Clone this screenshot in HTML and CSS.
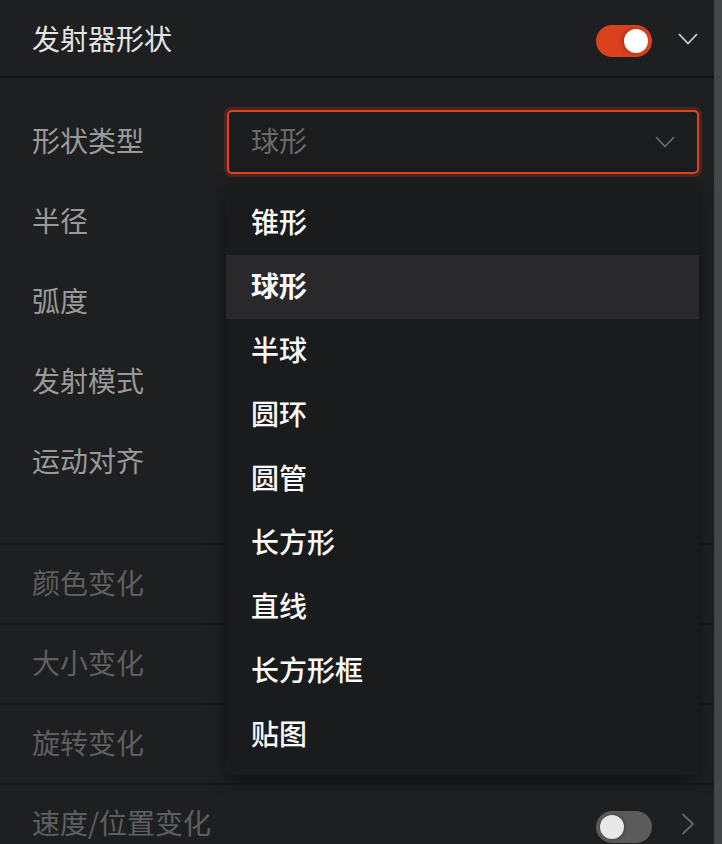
FILE: index.html
```html
<!DOCTYPE html>
<html>
  <head>
    <meta charset="utf-8">
    <title>发射器形状</title>
    <link rel="stylesheet" href="styles.css">
  </head>
  <body>
    <div class="panel">
      <div class="panel-header">
        <h1 class="title">发射器形状</h1>
        <span class="switch on"><span class="knob"></span></span>
        <svg class="chevron" width="20" height="12" viewBox="0 0 20 12">
          <polyline points="1,1 10,10.5 19,1" fill="none" stroke="#d0d0d0" stroke-width="1.8" />
        </svg>
      </div>

      <div class="form">
        <div class="field">
          <label class="field-label">形状类型</label>
          <div class="select-wrap">
            <div class="select">
              <span class="select-value">球形</span>
              <svg class="select-arrow" width="20" height="12" viewBox="0 0 20 12">
                <polyline points="1,1 10,10.5 19,1" fill="none" stroke="#6a6a6a" stroke-width="1.8" />
              </svg>
            </div>
            <ul class="menu">
              <li class="menu-item">锥形</li>
              <li class="menu-item selected">球形</li>
              <li class="menu-item">半球</li>
              <li class="menu-item">圆环</li>
              <li class="menu-item">圆管</li>
              <li class="menu-item">长方形</li>
              <li class="menu-item">直线</li>
              <li class="menu-item">长方形框</li>
              <li class="menu-item">贴图</li>
            </ul>
          </div>
        </div>
        <div class="field"><label class="field-label">半径</label></div>
        <div class="field"><label class="field-label">弧度</label></div>
        <div class="field"><label class="field-label">发射模式</label></div>
        <div class="field"><label class="field-label">运动对齐</label></div>
      </div>

      <div class="section"><span class="section-title">颜色变化</span></div>
      <div class="section"><span class="section-title">大小变化</span></div>
      <div class="section"><span class="section-title">旋转变化</span></div>
      <div class="section">
        <span class="section-title">速度/位置变化</span>
        <span class="switch"><span class="knob"></span></span>
        <svg class="chevron-right" width="14" height="22" viewBox="0 0 14 22">
          <polyline points="1.5,1 12,11 1.5,21" fill="none" stroke="#666" stroke-width="1.8" />
        </svg>
      </div>
    </div>
    <div class="track"></div>
  </body>
</html>
```

FILE: styles.css
```css
html,
body {
  height: 100%;
  overflow: hidden;
}

body {
  margin: 0;
  display: flex;
  background-color: #1e1f21;
  font-family: "Noto Sans CJK SC", "Noto Sans", sans-serif;
}

.panel {
  flex: 1;
}

.track {
  width: 8px;
  background-color: #454648;
}

.panel-header {
  display: flex;
  align-items: center;
  height: 76px;
  padding: 0 16px 0 32px;
  border-bottom: 2px solid #121315;
}

.title {
  flex: 1;
  margin: 0;
  font-size: 28px;
  font-weight: 400;
  color: #e4e4e4;
}

.switch {
  position: relative;
  width: 56px;
  height: 32px;
  margin-top: 6px;
  border-radius: 16px;
  background-color: #5b5b5c;
}

.switch .knob {
  position: absolute;
  top: 4px;
  left: 4px;
  width: 24px;
  height: 24px;
  border-radius: 50%;
  background-color: #e8e8e8;
  box-shadow: 1px 0 4px rgba(0, 0, 0, 0.3);
}

.switch.on {
  background-color: #d9421c;
}

.switch.on .knob {
  left: auto;
  right: 4px;
  background-color: #fff;
  box-shadow: -2px 0 4px rgba(0, 0, 0, 0.25);
}

.chevron {
  margin-left: 26px;
  margin-top: 2px;
}

.chevron-right {
  margin-left: 29px;
  margin-right: 4px;
}

.form {
  padding: 24px 15px 41px 32px;
}

.field {
  display: flex;
  align-items: center;
  height: 80px;
}

.field-label {
  width: 195px;
  padding-bottom: 4px;
  font-size: 28px;
  color: #9a9a9a;
}

.select-wrap {
  position: relative;
  flex: 1;
}

.select {
  display: flex;
  align-items: center;
  height: 60px;
  padding: 0 22px;
  border: 2px solid #de4420;
  border-radius: 5px;
  background-color: #1b1c1e;
  box-shadow: 0 0 0 3px rgba(200, 60, 30, 0.28);
}

.select-value {
  flex: 1;
  padding-bottom: 4px;
  font-size: 28px;
  color: #6a6a6a;
}

.menu {
  position: absolute;
  z-index: 2;
  top: calc(100% + 9px);
  left: -1px;
  right: 0;
  margin: 0;
  padding: 8px 0;
  list-style: none;
  background-color: #1a1b1d;
  border-radius: 4px;
  box-shadow: 0 6px 18px rgba(0, 0, 0, 0.45);
}

.menu-item {
  box-sizing: border-box;
  display: flex;
  align-items: center;
  height: 64px;
  padding: 0 0 4px 25px;
  font-size: 28px;
  font-weight: 500;
  color: #fafafa;
}

.menu-item.selected {
  background-color: #29292b;
  font-weight: 700;
}

.section {
  display: flex;
  align-items: center;
  height: 78px;
  padding: 0 15px 0 32px;
  border-top: 2px solid #17181a;
}

.section-title {
  flex: 1;
  padding-bottom: 4px;
  font-size: 28px;
  color: #5f5f60;
}
```
